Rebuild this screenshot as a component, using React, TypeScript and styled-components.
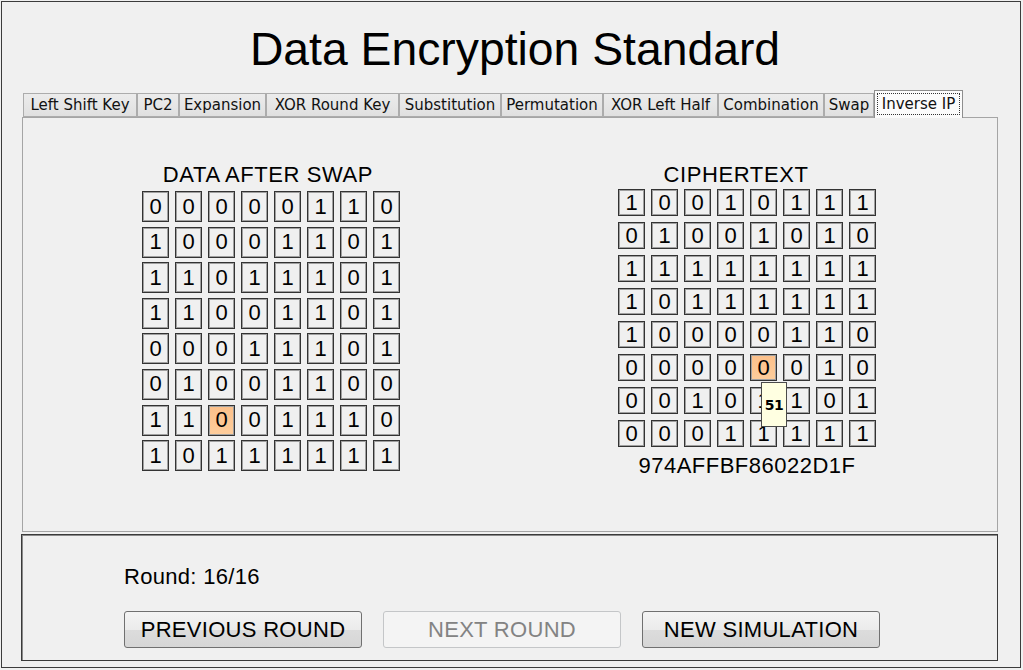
import React from 'react';
import styled, { createGlobalStyle } from 'styled-components';

const GlobalStyle = createGlobalStyle`
  html, body {
    margin: 0;
    padding: 0;
    background: #f0f0f0;
  }
  body {
    font-family: "Liberation Sans", Arial, sans-serif;
    color: #000;
  }
`;

const Frame = styled.div`
  box-sizing: border-box;
  width: 1020px;
  height: 667px;
  margin: 1px 0 0 1px;
  border: 1px solid #3c3c3c;
  background: #f0f0f0;
  display: flex;
  flex-direction: column;
`;

const Header = styled.div`
  height: 88px;
  display: flex;
  align-items: center;
  justify-content: center;
  padding: 6px 0 0 8px;
  box-sizing: border-box;
`;

const Title = styled.h1`
  margin: 0;
  font-size: 46.3px;
  font-weight: normal;
  line-height: 1;
`;

const TabStrip = styled.div`
  display: flex;
  align-items: flex-end;
  height: 27px;
  margin-left: 21px;
  position: relative;
  z-index: 1;
`;

const Tab = styled.div<{ $active?: boolean; $w: number }>`
  box-sizing: border-box;
  width: ${p => p.$w}px;
  height: ${p => (p.$active ? '28px' : '24px')};
  margin-bottom: ${p => (p.$active ? '-1px' : '0')};
  padding: ${p => (p.$active ? '2px 2px 3px' : '0')};
  display: flex;
  align-items: center;
  justify-content: center;
  font-family: "DejaVu Sans", Tahoma, sans-serif;
  font-size: 15px;
  color: #111;
  white-space: nowrap;
  border: 1px solid ${p => (p.$active ? '#8e8e8e' : '#acacac')};
  border-bottom: ${p => (p.$active ? 'none' : '1px solid #acacac')};
  background: ${p => (p.$active ? '#fbfbfb' : 'linear-gradient(#ececec, #e0e0e0)')};
`;

const FocusRing = styled.span`
  flex: 1;
  text-align: center;
  border: 1px dotted #333;
  line-height: 20px;
`;

const Panel = styled.div`
  box-sizing: border-box;
  width: 976px;
  height: 415px;
  margin-left: 20px;
  border: 1px solid #a5a5a5;
  background: #f0f0f0;
  display: grid;
  grid-template-columns: 476px 476px;
  padding: 45px 0 0 10px;
`;

const Block = styled.div`
  display: flex;
  flex-direction: column;
  align-items: center;
`;

const BlockTitle = styled.div<{ $gap: number; $shift: number }>`
  font-size: 22px;
  line-height: 24px;
  letter-spacing: 0.6px;
  margin-bottom: ${p => p.$gap}px;
  margin-right: ${p => p.$shift * 2}px;
`;

const BitGrid = styled.div<{ $rowGap: number }>`
  display: grid;
  grid-template-columns: repeat(8, 27px);
  column-gap: 6px;
  row-gap: ${p => p.$rowGap}px;
`;

const Cell = styled.div<{ $h: number; $hot?: boolean }>`
  position: relative;
  box-sizing: border-box;
  width: 27px;
  height: ${p => p.$h}px;
  border: 1px solid #333;
  box-shadow: inset 0 0 0 1px #a0a0a0;
  background: ${p => (p.$hot ? 'linear-gradient(#fcc08a, #fdcd9c)' : '#f0f0f0')};
  display: flex;
  align-items: center;
  justify-content: center;
  font-size: 22px;
  line-height: 1;
`;

const Tooltip = styled.div`
  position: absolute;
  top: calc(100% + 2px);
  left: 10px;
  z-index: 3;
  box-sizing: border-box;
  width: 26px;
  height: 45px;
  border: 1px solid #4a4a4a;
  background: #ffffe1;
  display: flex;
  align-items: center;
  justify-content: center;
  font-family: "DejaVu Sans", Tahoma, sans-serif;
  font-weight: bold;
  font-size: 14px;
  letter-spacing: -0.5px;
`;

const Hex = styled.div`
  font-size: 22px;
  line-height: 24px;
  letter-spacing: 0.5px;
  margin-top: 7px;
`;

const BottomPanel = styled.div`
  box-sizing: border-box;
  width: 977px;
  height: 127px;
  margin: 2px 0 0 19px;
  border: 1px solid #3a3a3a;
  box-shadow: inset 1px 1px 0 #8a8a8a;
  padding: 30px 0 0 102px;
`;

const RoundLabel = styled.div`
  font-size: 22px;
  line-height: 24px;
  letter-spacing: 0.3px;
`;

const ButtonRow = styled.div`
  display: flex;
  gap: 21px;
  margin-top: 22px;
`;

const Button = styled.button`
  box-sizing: border-box;
  width: 238px;
  height: 37px;
  border: 1px solid #707070;
  border-radius: 3px;
  background: linear-gradient(#f4f4f4 0%, #ebebeb 50%, #dcdcdc 51%, #d6d6d6 100%);
  font-family: "Liberation Sans", Arial, sans-serif;
  font-size: 22px;
  letter-spacing: 0.3px;
  color: #000;
  padding: 0;

  &:disabled {
    background: #f4f4f4;
    border-color: #c4c6c8;
    color: #838383;
  }
`;

const tabs = [
  { label: 'Left Shift Key', w: 114 },
  { label: 'PC2', w: 42 },
  { label: 'Expansion', w: 87 },
  { label: 'XOR Round Key', w: 133 },
  { label: 'Substitution', w: 102 },
  { label: 'Permutation', w: 102 },
  { label: 'XOR Left Half', w: 115 },
  { label: 'Combination', w: 106 },
  { label: 'Swap', w: 50 },
  { label: 'Inverse IP', w: 89 },
];

const swapped = [
  '00000110',
  '10001101',
  '11011101',
  '11001101',
  '00011101',
  '01001100',
  '11001110',
  '10111111',
];

const cipher = [
  '10010111',
  '01001010',
  '11111111',
  '10111111',
  '10000110',
  '00000010',
  '00101101',
  '00011111',
];

type GridProps = {
  rows: string[];
  cellH: number;
  rowGap: number;
  hot: [number, number];
  tip?: string;
};

const Bits = ({ rows, cellH, rowGap, hot, tip }: GridProps) => (
  <BitGrid $rowGap={rowGap}>
    {rows.map((row, r) =>
      row.split('').map((bit, c) => {
        const isHot = r === hot[0] && c === hot[1];
        return (
          <Cell key={`${r}-${c}`} $h={cellH} $hot={isHot}>
            {bit}
            {isHot && tip && <Tooltip>{tip}</Tooltip>}
          </Cell>
        );
      })
    )}
  </BitGrid>
);

const App = () => {
  return (
    <>
      <GlobalStyle />
      <Frame>
        <Header>
          <Title>Data Encryption Standard</Title>
        </Header>
        <TabStrip>
          {tabs.map(t =>
            t.label === 'Inverse IP' ? (
              <Tab key={t.label} $w={t.w} $active>
                <FocusRing>{t.label}</FocusRing>
              </Tab>
            ) : (
              <Tab key={t.label} $w={t.w}>
                {t.label}
              </Tab>
            )
          )}
        </TabStrip>
        <Panel>
          <Block>
            <BlockTitle $gap={4} $shift={3}>DATA AFTER SWAP</BlockTitle>
            <Bits rows={swapped} cellH={31} rowGap={4.6} hot={[6, 2]} />
          </Block>
          <Block>
            <BlockTitle $gap={2} $shift={11}>CIPHERTEXT</BlockTitle>
            {/* hover tooltip shows the bit position */}
            <Bits rows={cipher} cellH={27} rowGap={6} hot={[5, 4]} tip="51" />
            <Hex>974AFFBF86022D1F</Hex>
          </Block>
        </Panel>
        <BottomPanel>
          <RoundLabel>Round: 16/16</RoundLabel>
          <ButtonRow>
            <Button>PREVIOUS ROUND</Button>
            <Button disabled>NEXT ROUND</Button>
            <Button>NEW SIMULATION</Button>
          </ButtonRow>
        </BottomPanel>
      </Frame>
    </>
  );
};

export default App;
